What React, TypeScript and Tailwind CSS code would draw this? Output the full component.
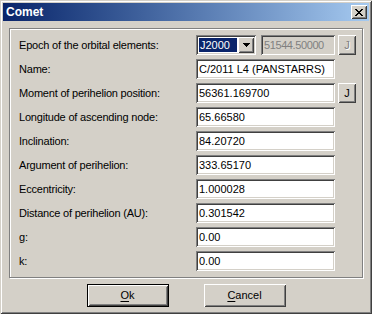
import React from 'react';

const sunken =
  'shadow-[inset_1px_1px_0_#808080,inset_-1px_-1px_0_#ffffff,inset_2px_2px_0_#404040,inset_-2px_-2px_0_#d4d0c8]';
const raised =
  'shadow-[inset_1px_1px_0_#ffffff,inset_-1px_-1px_0_#404040,inset_2px_2px_0_#d4d0c8,inset_-2px_-2px_0_#808080]';

const rows = [
  { label: 'Name:', value: 'C/2011 L4 (PANSTARRS)' },
  { label: 'Moment of perihelion position:', value: '56361.169700', j: true },
  { label: 'Longitude of ascending node:', value: '65.66580' },
  { label: 'Inclination:', value: '84.20720' },
  { label: 'Argument of perihelion:', value: '333.65170' },
  { label: 'Eccentricity:', value: '1.000028' },
  { label: 'Distance of perihelion (AU):', value: '0.301542' },
  { label: 'g:', value: '0.00' },
  { label: 'k:', value: '0.00' },
];

const JButton = ({ disabled }: { disabled?: boolean }) => (
  <div
    className={`w-[18px] h-[20px] flex items-center justify-center bg-[#d4d0c8] ${raised} ${
      disabled ? 'text-[#808080] [text-shadow:1px_1px_0_#ffffff]' : 'text-black'
    }`}
  >
    J
  </div>
);

const Row = ({ label, children }: { label: string; children: React.ReactNode }) => (
  <div className="flex items-center h-[20px]">
    <div className="w-[186px] pl-[9px] leading-none tracking-[-0.2px]">{label}</div>
    {children}
  </div>
);

const App = () => {
  return (
    <div className="w-[372px] h-[314px] bg-[#d4d0c8] p-[3px] flex flex-col font-['Liberation_Sans',Arial,sans-serif] text-[11px] text-black shadow-[inset_1px_1px_0_#d4d0c8,inset_-1px_-1px_0_#404040,inset_2px_2px_0_#ffffff,inset_-2px_-2px_0_#808080]">
      {/* title bar */}
      <div className="h-[18px] flex items-center justify-between pl-[3px] pr-[2px] bg-gradient-to-r from-[#0a246a] to-[#a6caf0]">
        <span className="text-white font-bold text-[12px]">Comet</span>
        <div className={`w-[16px] h-[14px] bg-[#d4d0c8] flex items-center justify-center ${raised}`}>
          <svg width="8" height="7" viewBox="0 0 8 7" shapeRendering="crispEdges">
            <path
              d="M0 0h2v1H0zM6 0h2v1H6zM1 1h2v1H1zM5 1h2v1H5zM2 2h4v1H2zM3 3h2v1H3zM2 4h4v1H2zM1 5h2v1H1zM5 5h2v1H5zM0 6h2v1H0zM6 6h2v1H6z"
              fill="#000"
            />
          </svg>
        </div>
      </div>

      <div className="flex-1 flex flex-col px-[6px] pt-[7px]">
        {/* group box */}
        <div className="h-[250px] border border-[#808080] shadow-[inset_1px_1px_0_#ffffff,1px_1px_0_#ffffff] pt-[6px] flex flex-col gap-[4px]">
          <Row label="Epoch of the orbital elements:">
            <div className={`w-[60px] h-[20px] bg-white flex items-stretch p-[2px] ${sunken}`}>
              <div className="flex-1 flex items-center pl-[1px] pr-[1px] py-[1px]">
                <span className="bg-[#0a246a] text-white h-full w-full flex items-center pl-[1px]">
                  J2000
                </span>
              </div>
              <div className={`w-[16px] bg-[#d4d0c8] flex items-center justify-center ${raised}`}>
                <svg width="7" height="4" viewBox="0 0 7 4" shapeRendering="crispEdges">
                  <path d="M0 0h7v1H0zM1 1h5v1H1zM2 2h3v1H2zM3 3h1v1H3z" fill="#000" />
                </svg>
              </div>
            </div>
            <div
              className={`w-[74px] h-[20px] ml-[5px] bg-[#d4d0c8] text-[#808080] flex items-center pl-[3px] tracking-[-0.4px] overflow-hidden ${sunken}`}
            >
              51544.50000
            </div>
            <div className="ml-[3px]">
              <JButton disabled />
            </div>
          </Row>
          {rows.map((r) => (
            <Row key={r.label} label={r.label}>
              <div className={`w-[139px] h-[20px] bg-white flex items-center pl-[3px] ${sunken}`}>
                {r.value}
              </div>
              {r.j && (
                <div className="ml-[3px]">
                  <JButton />
                </div>
              )}
            </Row>
          ))}
        </div>

        {/* buttons */}
        <div className="mt-[6px] flex justify-center gap-[35px]">
          <div className="w-[82px] h-[23px] border border-black">
            <div className={`w-full h-full flex items-center justify-center bg-[#d4d0c8] ${raised}`}>
              <span>
                <span className="underline underline-offset-2">O</span>k
              </span>
            </div>
          </div>
          <div className={`w-[82px] h-[23px] flex items-center justify-center bg-[#d4d0c8] ${raised}`}>
            <span>
              <span className="underline underline-offset-2">C</span>ancel
            </span>
          </div>
        </div>
      </div>
    </div>
  );
};

export default App;
